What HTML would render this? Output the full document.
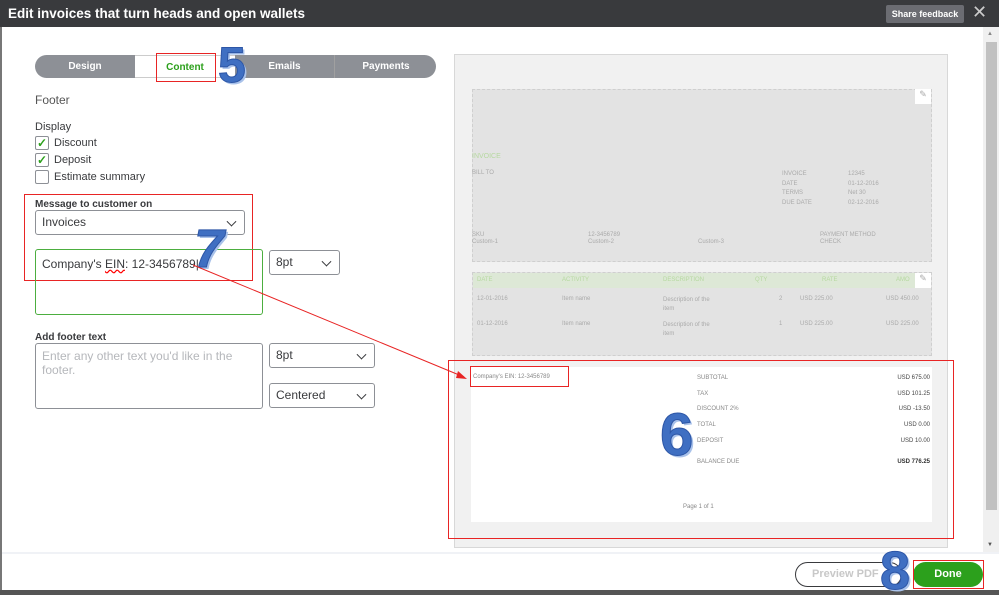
<!DOCTYPE html>
<html><head><meta charset="utf-8"><style>
*{box-sizing:border-box;margin:0;padding:0}
body{width:999px;height:595px;overflow:hidden;background:#fff;font-family:"Liberation Sans",sans-serif;position:relative;color:#393a3d}
.a{position:absolute}
.hdr{left:0;top:0;width:999px;height:27px;background:#393a3d;color:#fff;font-weight:bold;font-size:13.5px;line-height:27px;padding-left:8px}
.tabs{left:35px;top:55px;width:401px;height:23px;border-radius:12px;background:#8d9096;overflow:hidden}
.tab{position:absolute;top:0;height:23px;line-height:24px;text-align:center;color:#fff;font-weight:bold;font-size:10px}
.sel{border:1px solid #8d9096;border-radius:3px;background:#fff;font-size:12px;padding-left:6px;color:#393a3d}
.chev{position:absolute;right:9px;top:50%;width:7px;height:7px;border-right:1.6px solid #393a3d;border-bottom:1.6px solid #393a3d;transform:translateY(-70%) rotate(45deg)}
.cb{width:14px;height:14px;border:1px solid #8d9096;border-radius:2px}
.lbl{font-size:11px}
.red{border:1px solid #e82424}
.num{font-family:"Liberation Sans",sans-serif;font-weight:bold;font-style:italic;color:#3f6fc2;-webkit-text-stroke:1px #2d56a6;text-shadow:2px 2px 0 #a9c2ea}
.t{font-size:6px;color:#aaa;position:absolute}
.g{color:#b6d9a0}
</style></head><body>
<div class="a hdr">Edit invoices that turn heads and open wallets</div>
<div class="a" style="left:886px;top:5px;width:78px;height:18px;background:#6b6c72;border-radius:2px;color:#fff;font-size:9px;font-weight:bold;text-align:center;line-height:18px">Share feedback</div>
<div class="a" style="left:972px;top:2px;color:#ccc;font-size:18px">✕</div>
<div class="a" style="left:0;top:27px;width:2px;height:568px;background:#777"></div>

<div class="a tabs">
<div class="tab" style="left:0;width:100px">Design</div>
<div class="tab" style="left:100px;width:100px;background:#fff;color:#2ca01c;border-top:1px solid #ccc;border-bottom:1px solid #ccc">Content</div>
<div class="tab" style="left:200px;width:100px;border-right:1px solid #a0a0a0">Emails</div>
<div class="tab" style="left:301px;width:100px">Payments</div>
</div>
<div class="a red" style="left:156px;top:53px;width:60px;height:29px"></div>
<div class="a num" style="left:218px;top:36px;font-size:50px;font-style:normal">5</div>

<div class="a" style="left:35px;top:93px;font-size:12px;color:#555">Footer</div>
<div class="a lbl" style="left:35px;top:121px">Display</div>
<div class="a cb" style="left:35px;top:136px;color:#2ca01c;font-size:12px;line-height:12px;text-align:center;font-weight:bold">✓</div>
<div class="a lbl" style="left:54px;top:137px">Discount</div>
<div class="a cb" style="left:35px;top:153px;color:#2ca01c;font-size:12px;line-height:12px;text-align:center;font-weight:bold">✓</div>
<div class="a lbl" style="left:54px;top:154px">Deposit</div>
<div class="a cb" style="left:35px;top:170px"></div>
<div class="a lbl" style="left:54px;top:171px">Estimate summary</div>

<div class="a red" style="left:24px;top:194px;width:229px;height:87px"></div>
<div class="a" style="left:35px;top:199px;font-size:10px;font-weight:bold">Message to customer on</div>
<div class="a sel" style="left:35px;top:210px;width:210px;height:25px;line-height:23px">Invoices<span class="chev"></span></div>
<div class="a" style="left:35px;top:249px;width:228px;height:66px;border:1.5px solid #4cae3f;border-radius:3px;font-size:12px;padding:7px 6px">Company's <span style="text-decoration:underline wavy red">EIN</span>: 12-3456789|</div>
<div class="a num" style="left:194px;top:218px;font-size:54px">7</div>
<div class="a sel" style="left:269px;top:250px;width:71px;height:25px;line-height:23px">8pt<span class="chev"></span></div>

<div class="a" style="left:35px;top:332px;font-size:10px;font-weight:bold">Add footer text</div>
<div class="a" style="left:35px;top:343px;width:228px;height:66px;border:1px solid #8d9096;border-radius:3px;font-size:12px;padding:5px 6px;color:#b5b7bb;line-height:14px">Enter any other text you'd like in the footer.</div>
<div class="a sel" style="left:269px;top:343px;width:106px;height:25px;line-height:23px">8pt<span class="chev"></span></div>
<div class="a sel" style="left:269px;top:383px;width:106px;height:25px;line-height:23px">Centered<span class="chev"></span></div>

<div class="a" style="left:454px;top:54px;width:494px;height:494px;background:#f1f1f1;border:1px solid #d8d8d8"></div>
<div class="a" style="left:472px;top:89px;width:460px;height:173px;background:#e3e3e3;border:1px dashed #cfcfcf"></div>
<div class="a" style="left:915px;top:89px;width:16px;height:15px;background:#fff;color:#aaa;font-size:9px;text-align:center">✎</div>
<div class="t g" style="left:472px;top:153px;font-size:7px">INVOICE</div>
<div class="t" style="left:472px;top:170px">BILL TO</div>
<div class="t" style="left:782px;top:170px;line-height:9.6px">INVOICE<br>DATE<br>TERMS<br>DUE DATE</div>
<div class="t" style="left:848px;top:170px;line-height:9.6px">12345<br>01-12-2016<br>Net 30<br>02-12-2016</div>
<div class="t" style="left:472px;top:232px;line-height:7px">SKU<br>Custom-1</div>
<div class="t" style="left:588px;top:232px;line-height:7px">12-3456789<br>Custom-2</div>
<div class="t" style="left:698px;top:239px">Custom-3</div>
<div class="t" style="left:820px;top:232px;line-height:7px">PAYMENT METHOD<br>CHECK</div>

<div class="a" style="left:472px;top:272px;width:460px;height:84px;background:#e3e3e3;border:1px dashed #cfcfcf"></div>
<div class="a" style="left:473px;top:273px;width:458px;height:15px;background:#dde8d6"></div>
<div class="a" style="left:915px;top:273px;width:16px;height:15px;background:#fff;color:#aaa;font-size:9px;text-align:center">✎</div>
<div class="t g" style="left:477px;top:277px">DATE</div><div class="t g" style="left:562px;top:277px">ACTIVITY</div><div class="t g" style="left:663px;top:277px">DESCRIPTION</div><div class="t g" style="left:755px;top:277px">QTY</div><div class="t g" style="left:822px;top:277px">RATE</div><div class="t g" style="left:896px;top:277px">AMO</div>
<div class="t" style="left:477px;top:296px">12-01-2016</div><div class="t" style="left:562px;top:296px">Item name</div><div class="t" style="left:663px;top:296px;line-height:9px">Description of the<br>item</div><div class="t" style="left:779px;top:296px">2</div><div class="t" style="left:800px;top:296px">USD 225.00</div><div class="t" style="left:886px;top:296px">USD 450.00</div>
<div class="t" style="left:477px;top:321px">01-12-2016</div><div class="t" style="left:562px;top:321px">Item name</div><div class="t" style="left:663px;top:321px;line-height:9px">Description of the<br>item</div><div class="t" style="left:779px;top:321px">1</div><div class="t" style="left:800px;top:321px">USD 225.00</div><div class="t" style="left:886px;top:321px">USD 225.00</div>

<div class="a" style="left:471px;top:367px;width:461px;height:155px;background:#fff"></div>
<div class="a red" style="left:448px;top:360px;width:506px;height:179px"></div>
<div class="a red" style="left:470px;top:366px;width:99px;height:21px"></div>
<div class="t" style="left:473px;top:374px;color:#888">Company's EIN: 12-3456789</div>
<div class="t" style="left:697px;top:371px;line-height:15.7px;color:#888">SUBTOTAL<br>TAX<br>DISCOUNT 2%<br>TOTAL<br>DEPOSIT</div>
<div class="t" style="left:697px;top:459px;color:#888">BALANCE DUE</div>
<div class="t" style="left:850px;top:371px;width:80px;text-align:right;line-height:15.7px;color:#444">USD 675.00<br>USD 101.25<br>USD -13.50<br>USD 0.00<br>USD 10.00</div>
<div class="t" style="left:850px;top:459px;width:80px;text-align:right;color:#333;font-weight:bold">USD 776.25</div>
<div class="t" style="left:683px;top:504px;color:#888">Page 1 of 1</div>
<div class="a num" style="left:660px;top:400px;font-size:60px;font-style:normal">6</div>

<svg class="a" style="left:0;top:0" width="999" height="595"><line x1="193" y1="265" x2="464" y2="377" stroke="#e82424" stroke-width="1"/><polygon points="467,379 458,371 456,378" fill="#e82424"/></svg>

<div class="a" style="left:983px;top:27px;width:16px;height:526px;background:#f0f0f0"></div>
<div class="a" style="left:986px;top:42px;width:11px;height:468px;background:#c1c1c1"></div>
<div class="a" style="left:987px;top:31px;font-size:6px;color:#888">▲</div>
<div class="a" style="left:987px;top:542px;font-size:6px;color:#555">▼</div>

<div class="a" style="left:2px;top:552px;width:997px;height:2px;background:#f0f2f6"></div>
<div class="a" style="left:0;top:590px;width:999px;height:5px;background:#555"></div>
<div class="a" style="left:795px;top:562px;width:107px;height:25px;border:1.5px solid #393a3d;border-radius:13px;color:#c8c8c8;font-weight:bold;font-size:11px;line-height:22px;padding-left:16px">Preview PDF</div>
<div class="a num" style="left:880px;top:540px;font-size:54px;font-style:normal">8</div>
<div class="a" style="left:913px;top:562px;width:70px;height:25px;background:#2ca01c;border-radius:13px;color:#fff;font-weight:bold;font-size:11px;line-height:25px;text-align:center">Done</div>
<div class="a red" style="left:913px;top:560px;width:71px;height:29px"></div>
</body></html>
